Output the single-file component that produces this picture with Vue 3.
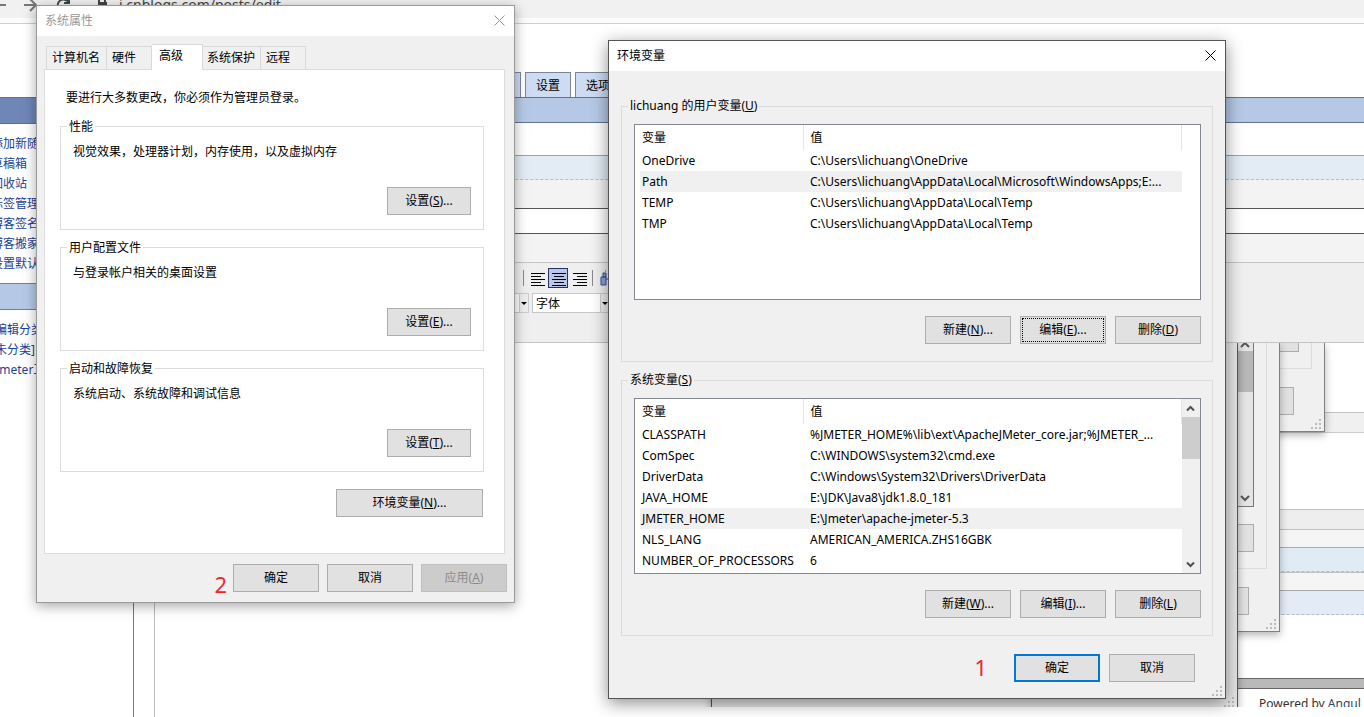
<script setup>
const quickLinks = ['添加新随笔', '草稿箱', '回收站', '标签管理', '博客签名', '博客搬家', '设置默认编辑器']
const categoryLinks = ['[编辑分类]', '[未分类]', '[Jmeter工具]']
const tabs = ['计算机名', '硬件', '高级', '系统保护', '远程']
const groups = [
  { title: '性能', text: '视觉效果，处理器计划，内存使用，以及虚拟内存', key: 'S' },
  { title: '用户配置文件', text: '与登录帐户相关的桌面设置', key: 'E' },
  { title: '启动和故障恢复', text: '系统启动、系统故障和调试信息', key: 'T' }
]
const variableGroups = [
  {
    owner: 'lichuang 的用户变量',
    key: 'U',
    selected: 'Path',
    scroll: false,
    focused: 1,
    rows: [
      ['OneDrive', 'C:\\Users\\lichuang\\OneDrive'],
      ['Path', 'C:\\Users\\lichuang\\AppData\\Local\\Microsoft\\WindowsApps;E:...'],
      ['TEMP', 'C:\\Users\\lichuang\\AppData\\Local\\Temp'],
      ['TMP', 'C:\\Users\\lichuang\\AppData\\Local\\Temp']
    ],
    actions: [['新建', 'N', '...'], ['编辑', 'E', '...'], ['删除', 'D', '']]
  },
  {
    owner: '系统变量',
    key: 'S',
    selected: 'JMETER_HOME',
    scroll: true,
    focused: -1,
    rows: [
      ['CLASSPATH', '%JMETER_HOME%\\lib\\ext\\ApacheJMeter_core.jar;%JMETER_...'],
      ['ComSpec', 'C:\\WINDOWS\\system32\\cmd.exe'],
      ['DriverData', 'C:\\Windows\\System32\\Drivers\\DriverData'],
      ['JAVA_HOME', 'E:\\JDK\\Java8\\jdk1.8.0_181'],
      ['JMETER_HOME', 'E:\\Jmeter\\apache-jmeter-5.3'],
      ['NLS_LANG', 'AMERICAN_AMERICA.ZHS16GBK'],
      ['NUMBER_OF_PROCESSORS', '6']
    ],
    actions: [['新建', 'W', '...'], ['编辑', 'I', '...'], ['删除', 'L', '']]
  }
]
const gripDots = [[8, 0], [4, 4], [8, 4], [0, 8], [4, 8], [8, 8]]
</script>

<template>
  <div class="desktop">
    <div class="browser">
      <header class="chrome">
        <svg class="chrome-icons" viewBox="0 0 110 24" aria-hidden="true">
          <path d="M0 5H6M24 5H36M30 -1L36 5L30 11" fill="none" stroke="#777" stroke-width="2" />
          <path d="M69 3A6 6 0 1 0 69 8M69 -2V3H64" fill="none" stroke="#444" stroke-width="2" />
          <path d="M99 3V1A3 3 0 0 1 105 1V3" fill="none" stroke="#444" stroke-width="2" />
          <rect x="98" y="2" width="9" height="8" fill="#444" />
        </svg>
        <input class="address" aria-label="地址" value="i.cnblogs.com/posts/edit" />
      </header>

      <div class="page">
        <nav class="side">
          <div class="side-title dark"></div>
          <ul>
            <li v-for="link in quickLinks" :key="link"><a href="#">{{ link }}</a></li>
          </ul>
          <div class="side-title"></div>
          <ul>
            <li v-for="link in categoryLinks" :key="link"><a href="#">{{ link }}</a></li>
          </ul>
        </nav>

        <main class="main">
          <div class="page-tabs">
            <a href="#"></a>
            <a href="#">设置</a>
            <a href="#">选项</a>
          </div>
          <div class="blue-bar"></div>
          <div class="band"></div>
          <div class="label-row"></div>
          <div class="title-box"></div>
          <div class="label-row"></div>
          <div class="editor-tools">
            <div class="tool-row">
              <i class="divider"></i>
              <button class="tool" aria-label="左对齐">
                <svg viewBox="0 0 20 20"><path d="M4 5.5H18M4 8.5H14M4 11.5H18M4 14.5H14M4 17.5H18" /></svg>
              </button>
              <button class="tool on" aria-label="居中">
                <svg viewBox="0 0 20 20"><path d="M4 5.5H18M6 8.5H16M4 11.5H18M6 14.5H16M4 17.5H18" /></svg>
              </button>
              <button class="tool" aria-label="右对齐">
                <svg viewBox="0 0 20 20"><path d="M4 5.5H18M8 8.5H18M4 11.5H18M8 14.5H18M4 17.5H18" /></svg>
              </button>
              <i class="divider"></i>
              <button class="tool" aria-label="查找">
                <svg viewBox="0 0 20 20">
                  <path class="find" d="M5 9H10V17H5ZM13 9H18V17H13ZM7 5H10V9H7ZM13 5H16V9H13ZM10 11H13M9 3H10M13 3H14" />
                </svg>
              </button>
            </div>
            <div class="select-row">
              <span class="drop stub"><svg viewBox="0 0 8 18"><path d="M1 8H7L4 11Z" /></svg></span>
              <span class="drop">
                <select aria-label="字体"><option>字体</option></select>
                <svg viewBox="0 0 8 18"><path d="M1 8H7L4 11Z" /></svg>
              </span>
            </div>
          </div>
        </main>
      </div>
    </div>

    <div class="remnants" aria-hidden="true">
      <div class="stripes">
        <div class="stripe upper"></div>
        <div class="stripe middle"></div>
        <div class="stripe pale"></div>
        <div class="stripe sky"></div>
        <div class="stripe pale"></div>
        <div class="stripe sky second"></div>
        <div class="stripe footer-bar"></div>
        <p>Powered by <span>Angul</span></p>
      </div>
      <div class="ghost ghost-a">
        <div class="ghost-frame"><i class="ghost-button"></i></div>
        <i class="ghost-button"></i>
        <svg class="grip" viewBox="0 0 10 10"><rect v-for="d in gripDots" :key="d.join()" :x="d[0]" :y="d[1]" width="2" height="2" /></svg>
      </div>
      <div class="ghost ghost-b">
        <div class="ghost-frame">
          <div class="ghost-scroll">
            <svg viewBox="0 0 16 8"><path d="M4 4L8 0L12 4" /></svg>
            <i></i>
            <svg class="down" viewBox="0 0 16 16"><path d="M4 6L8 10L12 6" /></svg>
          </div>
          <i class="ghost-button"></i>
        </div>
        <i class="ghost-button"></i>
        <svg class="grip" viewBox="0 0 10 10"><rect v-for="d in gripDots" :key="d.join()" :x="d[0]" :y="d[1]" width="2" height="2" /></svg>
      </div>
      <div class="ghost ghost-c">
        <svg class="grip" viewBox="0 0 10 10"><rect v-for="d in gripDots" :key="d.join()" :x="d[0]" :y="d[1]" width="2" height="2" /></svg>
      </div>
    </div>

    <section class="window properties" aria-label="系统属性">
      <header class="titlebar">
        <h2>系统属性</h2>
        <button class="close" aria-label="关闭">
          <svg viewBox="0 0 11 11"><path d="M0.5 0.5L10.5 10.5M10.5 0.5L0.5 10.5" /></svg>
        </button>
      </header>
      <div class="tabs" role="tablist">
        <button
          v-for="tab in tabs"
          :key="tab"
          role="tab"
          :aria-selected="tab === '高级'"
          :class="{ active: tab === '高级' }"
        >{{ tab }}</button>
      </div>
      <div class="panel">
        <p class="notice">要进行大多数更改，你必须作为管理员登录。</p>
        <fieldset v-for="group in groups" :key="group.title" class="option-group">
          <legend>{{ group.title }}</legend>
          <div class="option-body">
            <p>{{ group.text }}</p>
            <button class="btn">设置(<u>{{ group.key }}</u>)...</button>
          </div>
        </fieldset>
        <button class="btn wide">环境变量(<u>N</u>)...</button>
      </div>
      <footer class="actions">
        <span class="mark">2</span>
        <button class="btn">确定</button>
        <button class="btn">取消</button>
        <button class="btn" disabled>应用(<u>A</u>)</button>
      </footer>
    </section>

    <section class="window environment" aria-label="环境变量">
      <header class="titlebar">
        <h2>环境变量</h2>
        <button class="close" aria-label="关闭">
          <svg viewBox="0 0 11 11"><path d="M0.5 0.5L10.5 10.5M10.5 0.5L0.5 10.5" /></svg>
        </button>
      </header>
      <div class="env-body">
        <fieldset v-for="group in variableGroups" :key="group.key" class="var-group">
          <legend>{{ group.owner }}(<u>{{ group.key }}</u>)</legend>
          <div class="list">
            <table>
              <thead>
                <tr><th>变量</th><th>值</th></tr>
              </thead>
              <tbody>
                <tr v-for="row in group.rows" :key="row[0]" :class="{ selected: row[0] === group.selected }">
                  <td>{{ row[0] }}</td>
                  <td>{{ row[1] }}</td>
                </tr>
              </tbody>
            </table>
            <div v-if="group.scroll" class="scrollbar">
              <button aria-label="向上"><svg viewBox="0 0 17 17"><path d="M5 10.5L8.5 7L12 10.5" /></svg></button>
              <i class="thumb"></i>
              <button class="down" aria-label="向下"><svg viewBox="0 0 17 17"><path d="M5 6.5L8.5 10L12 6.5" /></svg></button>
            </div>
          </div>
          <div class="list-actions">
            <button
              v-for="(action, i) in group.actions"
              :key="action[1]"
              class="btn"
              :class="{ focused: i === group.focused }"
            >{{ action[0] }}(<u>{{ action[1] }}</u>){{ action[2] }}</button>
          </div>
        </fieldset>
      </div>
      <footer class="actions">
        <span class="mark">1</span>
        <button class="btn default">确定</button>
        <button class="btn">取消</button>
      </footer>
      <svg class="grip" viewBox="0 0 10 10"><rect v-for="d in gripDots" :key="d.join()" :x="d[0]" :y="d[1]" width="2" height="2" /></svg>
    </section>
  </div>
</template>

<style>
html,
body {
  background: #fff;
}
</style>

<style scoped>
* {
  box-sizing: border-box;
}

.desktop {
  position: relative;
  min-height: 100vh;
  overflow: hidden;
  font: 12px/16px 'Noto Sans', 'Noto Sans CJK SC', sans-serif;
  color: #000;
}

button,
input,
select {
  font: inherit;
  color: inherit;
  margin: 0;
  padding: 0;
  border: 0;
  background: none;
  border-radius: 0;
}

p,
h2,
ul {
  margin: 0;
  padding: 0;
  font-size: inherit;
  font-weight: normal;
  list-style: none;
}

a {
  color: inherit;
  text-decoration: none;
}

svg {
  display: block;
}

/* Browser behind the dialogs */
.browser {
  display: flex;
  flex-direction: column;
  min-height: 100vh;
}

.chrome {
  display: flex;
  height: 24px;
  background: linear-gradient(#f1f1f1 18px, #fcfcfc 18px);
  border-bottom: 1px solid #cfcfcf;
}

.chrome-icons {
  width: 110px;
  height: 24px;
}

.address {
  width: 400px;
  height: 22px;
  margin: -7px 0 0 9px;
  font-size: 14px;
  color: #444;
}

.page {
  display: flex;
  flex: 1;
}

.side {
  width: 134px;
  margin-right: 20px;
  padding-top: 73px;
  border-right: 1px solid #777;
  color: #1c3f94;
}

.side-title {
  height: 27px;
  background: #b5c9e6;
  border: solid #6a7fa5;
  border-width: 1px 0;
}

.side-title.dark {
  background: #6f87b7;
  border-color: #5d7099;
}

.side ul {
  margin: 10px 0 9px -9px;
  line-height: 20px;
  white-space: nowrap;
}

.main {
  flex: 1;
  border-left: 1px solid #bbb;
}

.page-tabs {
  display: flex;
  gap: 4px;
  padding: 48px 0 0 320px;
}

.page-tabs a {
  width: 46px;
  height: 25px;
  line-height: 26px;
  text-align: center;
  background: #cddbf3;
  border: 1px solid #7b8794;
  border-bottom: 0;
}

.blue-bar {
  height: 26px;
  margin-bottom: 32px;
  background: #b5c9e6;
  border: solid #5f7396;
  border-width: 1px 0;
}

.band {
  height: 25px;
  background: #e3ecf5;
  border-top: 1px solid #92a5bb;
  border-bottom: 1px dashed #aebfd0;
}

.label-row {
  height: 28px;
  background: #f4f3f3;
}

.title-box {
  height: 26px;
  background: #fff;
  border: solid #555;
  border-width: 1px 0;
}

.editor-tools {
  height: 81px;
  background: #efefef;
  border: solid #c4c4c4;
  border-width: 1px 0;
}

.tool-row {
  display: flex;
  align-items: center;
  gap: 1px;
  height: 30px;
  padding-left: 366px;
}

.divider {
  width: 1px;
  height: 16px;
  margin: 0 2px;
  background: #888;
}

.tool {
  width: 20px;
  height: 20px;
}

.tool.on {
  background: #b9c8ea;
  outline: 1px solid #28325e;
  outline-offset: -1px;
}

.tool path {
  fill: none;
  stroke: #000;
}

.tool .find {
  fill: #8aa5dc;
  stroke: #31508f;
}

.select-row {
  display: flex;
  gap: 3px;
  padding-left: 320px;
}

.drop {
  display: flex;
  width: 78px;
  height: 20px;
  background: #fff;
  border: 1px solid #c8c8c8;
}

.drop.stub {
  width: 54px;
  justify-content: flex-end;
}

.drop select {
  flex: 1;
  padding: 2px 0 0 3px;
  appearance: none;
}

.drop svg {
  width: 8px;
  height: 18px;
  background: #eee;
  outline: 1px solid #ccc;
}

/* Window edges left over behind the environment dialog */
.remnants {
  position: absolute;
  top: 343px;
  right: 0;
  bottom: 10px;
  left: 700px;
  overflow: hidden;
}

.stripes {
  margin-left: 537px;
  padding-top: 69px;
}

.stripe {
  border-top: 1px solid #c0c0c0;
}

.upper {
  height: 21px;
  margin-bottom: 76px;
  background: #f0f0f0;
  border-bottom: 1px solid #ccc;
}

.middle {
  height: 20px;
  background: #eee;
}

.pale {
  height: 18px;
  background: #f5f5f5;
}

.sky {
  height: 25px;
  background: #e0ecf5;
  border-top: 1px solid #aaa;
  border-bottom: 1px dashed #aebfd0;
}

.sky.second {
  margin-bottom: 63px;
  background: #e3ebf6;
}

.footer-bar {
  height: 11px;
  background: #b9b9b9;
  border: solid #666;
  border-width: 1px 0;
}

.stripes p {
  padding: 7px 0 0 22px;
  white-space: nowrap;
  color: #333;
}

.stripes p span {
  color: #28466b;
}

.ghost {
  position: absolute;
  top: 0;
  background: #f0f0f0;
  border: solid #808080;
  border-width: 0 1px 1px;
  box-shadow: 0 3px 8px rgba(0, 0, 0, 0.3);
}

.ghost-a {
  left: 400px;
  width: 225px;
  height: 89px;
  padding-right: 12px;
}

.ghost-b {
  left: 300px;
  width: 280px;
  height: 289px;
  padding-right: 12px;
}

.ghost-c {
  left: 11px;
  width: 527px;
  height: 380px;
  background: #e6e6e6;
  border-color: #555;
}

.ghost-frame {
  padding-right: 12px;
  border: solid #dcdcdc;
  border-width: 0 1px 1px 0;
}

.ghost-button {
  display: block;
  width: 86px;
  height: 28px;
  margin-left: auto;
  background: #e1e1e1;
  border: 1px solid #adadad;
}

.ghost-a .ghost-frame {
  height: 26px;
}

.ghost-a .ghost-frame .ghost-button {
  height: 9px;
  border-top: 0;
}

.ghost-a > .ghost-button {
  margin: 18px 18px 0 auto;
}

.ghost-b .ghost-frame {
  height: 226px;
}

.ghost-b > .ghost-button {
  margin: 18px 18px 0 auto;
}

.ghost-scroll {
  display: flex;
  flex-direction: column;
  align-items: flex-end;
  height: 164px;
  margin-bottom: 17px;
  background: #e4e4e4;
  border: solid #777;
  border-width: 0 1px 1px 0;
}

.ghost-scroll i {
  width: 17px;
  height: 41px;
  background: #b8b8b8;
}

.ghost-scroll svg {
  width: 16px;
}

.ghost-scroll .down {
  margin-top: auto;
}

.ghost-scroll path {
  fill: none;
  stroke: #555;
  stroke-width: 2;
}

.grip {
  position: absolute;
  right: 3px;
  bottom: 2px;
  width: 10px;
  height: 10px;
  fill: #bbb;
}

.ghost-c .grip {
  bottom: 15px;
}

/* Dialogs */
.window {
  position: absolute;
  background: #f0f0f0;
}

.properties {
  top: 5px;
  left: 36px;
  width: 479px;
  border: 1px solid #9a9a9a;
  box-shadow: 0 3px 12px rgba(0, 0, 0, 0.35);
}

.environment {
  top: 40px;
  left: 608px;
  width: 618px;
  border: 1px solid #555;
  box-shadow: 0 4px 16px rgba(0, 0, 0, 0.45);
}

.titlebar {
  display: flex;
  align-items: center;
  justify-content: space-between;
  height: 30px;
  padding: 0 9px 0 8px;
  background: #fff;
}

.properties .titlebar {
  color: #999;
}

.close {
  display: flex;
  align-items: center;
  justify-content: center;
  width: 11px;
  height: 25px;
  margin-bottom: 1px;
}

.close svg {
  width: 11px;
  height: 11px;
  flex: none;
  fill: none;
  stroke: currentColor;
}

.tabs {
  display: flex;
  position: relative;
  align-items: flex-end;
  height: 33px;
  margin: 0 9px;
}

.tabs button {
  height: 23px;
  padding: 0 15px 0 5px;
  border: solid #d9d9d9;
  border-width: 1px 1px 0 0;
}

.tabs button:first-child {
  padding: 0 6px 0 5px;
  border-left-width: 1px;
}

.tabs button:nth-child(4) {
  padding: 0 5px 0 4px;
}

.tabs .active {
  height: 26px;
  margin-bottom: -1px;
  padding: 0 19px 3px 7px;
  background: #fff;
}

.panel {
  display: flex;
  flex-direction: column;
  height: 485px;
  margin: 0 9px 0 7px;
  padding: 20px 20px 33px 15px;
  background: #fff;
  border: 1px solid #dcdcdc;
}

.notice {
  margin-bottom: 11px;
  padding-left: 6px;
}

fieldset {
  min-width: 0;
  margin: 0;
  padding: 0;
  border: 1px solid #dcdcdc;
}

legend {
  margin-left: 6px;
  padding: 0 2px;
}

.option-group {
  margin-bottom: 8px;
}

.option-group legend {
  padding-top: 2px;
}

.option-body {
  display: flex;
  flex-direction: column;
  gap: 27px;
  padding: 9px 12px 14px;
}

.btn {
  width: 86px;
  height: 28px;
  text-align: center;
  background: #e1e1e1;
  border: 1px solid #adadad;
}

.option-body .btn {
  width: 84px;
  align-self: flex-end;
}

.btn.wide {
  width: 147px;
  margin: 9px 1px 0 0;
  align-self: flex-end;
}

.btn:disabled {
  color: #8b8b8b;
  background: #ccc;
  border-color: #bfbfbf;
}

.btn.default {
  border: 2px solid #0078d7;
}

.btn.focused {
  outline: 1px dotted #000;
  outline-offset: -3px;
}

.actions {
  display: flex;
  justify-content: flex-end;
  gap: 9px;
  padding: 10px 7px;
}

.properties .actions {
  gap: 8px;
}

.mark {
  align-self: flex-end;
  font-size: 22px;
  line-height: 20px;
  color: #f0262a;
}

.properties .mark {
  margin: 0 -2px -2px 0;
}

.env-body {
  display: flex;
  flex-direction: column;
  gap: 10px;
  padding: 27px 12px 0;
}

.var-group {
  padding: 0 11px 17px 12px;
}

.var-group legend {
  margin-left: -6px;
}

.list {
  display: flex;
  height: 176px;
  margin-top: 10px;
  padding-left: 5px;
  overflow: hidden;
  background: #fff;
  border: 1px solid #828790;
}

table {
  width: 542px;
  height: max-content;
  table-layout: fixed;
  border-collapse: collapse;
}

th,
td {
  height: 21px;
  padding: 0 2px;
  overflow: hidden;
  font-weight: normal;
  text-align: left;
  white-space: nowrap;
}

th {
  height: 25px;
  border-right: 1px solid #e5e5e5;
}

th:first-child {
  width: 163px;
}

th:last-child,
td:last-child {
  padding-left: 7px;
}

.selected {
  background: #f0f0f0;
}

.scrollbar {
  display: flex;
  flex-direction: column;
  flex: 1;
  background: #f0f0f0;
}

.scrollbar button {
  height: 18px;
}

.scrollbar svg {
  width: 17px;
  height: 17px;
}

.scrollbar path {
  fill: none;
  stroke: #505050;
  stroke-width: 2;
}

.scrollbar .down {
  margin-top: auto;
}

.thumb {
  height: 42px;
  background: #cdcdcd;
}

.list-actions {
  display: flex;
  justify-content: flex-end;
  gap: 9px;
  margin-top: 16px;
}

.environment .actions {
  padding: 18px 30px 16px;
}

.environment .mark {
  margin: 0 18px 5px 0;
}
</style>
